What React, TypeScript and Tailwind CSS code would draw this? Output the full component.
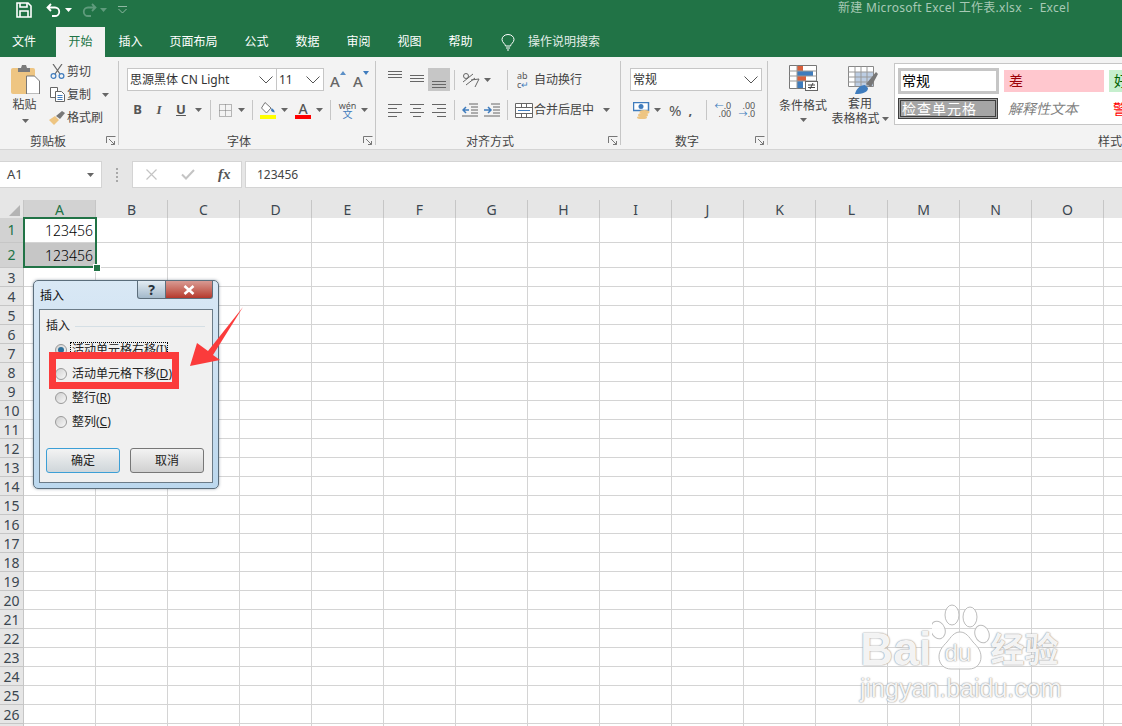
import { Fragment, type ReactNode } from "react";

const COLUMNS = ["A", "B", "C", "D", "E", "F", "G", "H", "I", "J", "K", "L", "M", "N", "O"];
const ROWS = Array.from({ length: 27 }, (_, i) => i + 1);
const TABS = [
  { label: "文件", w: "w-[56px] pr-[8px]" },
  { label: "开始", w: "w-[49px]", active: true },
  { label: "插入", w: "w-[51px]" },
  { label: "页面布局", w: "w-[75px]" },
  { label: "公式", w: "w-[51px]" },
  { label: "数据", w: "w-[51px]" },
  { label: "审阅", w: "w-[51px]" },
  { label: "视图", w: "w-[51px]" },
  { label: "帮助", w: "w-[51px]" },
];

const Caret = ({ className = "" }: { className?: string }) => (
  <svg width="7" height="4" viewBox="0 0 7 4" className={`shrink-0 ${className}`}>
    <path d="M0 0h7L3.5 4z" fill="#666" />
  </svg>
);

const Chevron = () => (
  <svg width="14" height="8" viewBox="0 0 14 8" fill="none" stroke="#555" strokeWidth="1">
    <path d="M0.5 0.5 7 7l6.500-6.500" />
  </svg>
);

const Launcher = () => (
  <svg width="10" height="10" viewBox="0 0 10 10" fill="none" stroke="#777" strokeWidth="1">
    <path d="M0.500 7V0.500H9.500M3 3l5.500 5.500M8.500 5v3.500H5" />
  </svg>
);

// horizontal lines used by the alignment buttons
const Lines = ({ rows, w = 16, h = 16, color = "#666" }: { rows: number[][]; w?: number; h?: number; color?: string }) => (
  <svg width={w} height={h} viewBox={`0 0 ${w} ${h}`} stroke={color} strokeWidth="1">
    {rows.map(([x1, x2, y], i) => (
      <line key={i} x1={x1} x2={x2} y1={y + 0.5} y2={y + 0.5} />
    ))}
  </svg>
);

const Sep = ({ className = "" }: { className?: string }) => <div className={`w-px h-[20px] bg-[#c6c6c6] shrink-0 ${className}`} />;

const Group = ({ width, label, labelPad, children }: { width: string; label: string; labelPad: string; children: ReactNode }) => (
  <div className={`${width} shrink-0 h-full flex`}>
    <div className="flex-1 min-w-0 flex flex-col">
      <div className="h-[75px]">{children}</div>
      <div className="flex-1 flex items-center relative pt-[3px]">
        <div className={`flex-1 text-center text-[12px] leading-[14px] text-[#444] ${labelPad}`}>{label}</div>
        <div className="absolute right-[2px] bottom-[3px]">
          <Launcher />
        </div>
      </div>
    </div>
    <div className="w-px bg-[#c6c6c6] my-[4px]" />
  </div>
);

const Combo = ({ text, width, className = "" }: { text: string; width: string; className?: string }) => (
  <div className={`${width} h-[23px] bg-white border border-[#c6c6c6] flex items-center justify-between pl-[2px] pr-[3px] text-[12px] text-[#333] ${className}`}>
    <span className="whitespace-nowrap">{text}</span>
    <Chevron />
  </div>
);

const ClipRow = ({ icon, label, caret }: { icon: ReactNode; label: string; caret?: boolean }) => (
  <div className="h-[23px] flex items-center">
    <div className="w-[18px] flex justify-center shrink-0">{icon}</div>
    <span className="text-[12px] text-[#444] whitespace-nowrap ml-[1px]">{label}</span>
    {caret && <Caret className="ml-[11px]" />}
  </div>
);

const PasteIcon = () => (
  <svg width="29" height="29" viewBox="0 0 29 29">
    <rect x="0" y="3" width="24" height="26" rx="2" fill="#eec582" />
    <path d="M7 3h3l1-3h4l1 3h3v4H7z" fill="#7b7b7b" />
    <path d="M15.500 11h8l5 5v13h-13z" fill="#fff" stroke="#777" />
  </svg>
);

const FontA = ({ up }: { up: boolean }) => (
  <div className="w-[22px] h-[20px] flex items-start justify-center text-[#666] text-[15px] leading-[22px] font-medium">
    A
    <svg width="6" height="4" viewBox="0 0 6 4" className="mt-[1px]">
      <path d={up ? "M0 4h6L3 0z" : "M0 0h6L3 4z"} fill={up ? "#5b8fc6" : "#3f7cbd"} />
    </svg>
  </div>
);

const GalleryCell = ({ className, children }: { className: string; children: ReactNode }) => (
  <div className={`w-[101px] shrink-0 flex items-center pl-[5px] text-[14px] whitespace-nowrap ${className}`}>{children}</div>
);

const Radio = ({ checked }: { checked?: boolean }) => (
  <div className="w-[12px] h-[12px] rounded-full border border-[#9a9a9a] bg-linear-to-br from-[#cfcfcf] to-[#f8f8f8] flex items-center justify-center shrink-0">
    {checked && <div className="w-[6px] h-[6px] rounded-full bg-[#2c6f99]" />}
  </div>
);

const InsertDialog = () => (
  <div className="absolute left-[33px] top-[280px] w-[186px] h-[209px] rounded-[5px] border border-[#5b6d7b] bg-linear-to-b from-[#d9e8f5] to-[#bcd8ee] px-[5px] pb-[5px] flex flex-col shadow-[0_0_3px_rgba(60,80,100,0.5)]">
    <div className="h-[28px] shrink-0 flex items-start">
      <span className="ml-[1px] mt-[6px] text-[12px] leading-[18px] text-[#111]">插入</span>
      <div className="ml-auto flex">
        <div className="w-[29px] h-[18px] border border-t-0 border-[#5d6f7c] rounded-bl-[3px] bg-linear-to-b from-[#e3ecf3] to-[#a3b9ca] flex items-center justify-center text-[14px] font-bold text-[#27313a]">
          ?
        </div>
        <div className="w-[47px] h-[18px] border border-t-0 border-l-0 border-[#5d6f7c] rounded-br-[3px] bg-linear-to-b from-[#d89a93] to-[#b5372c] flex items-center justify-center">
          <svg width="12" height="10" viewBox="0 0 12 10" stroke="#fff" strokeWidth="2.600">
            <path d="M1.500 1l9 8M10.500 1l-9 8" />
          </svg>
        </div>
      </div>
    </div>
    <div className="flex-1 border border-[#6c7c88] bg-[#f0f0f0] flex flex-col px-[6px] text-[12px] text-[#222]">
      <div className="flex items-center h-[30px] mt-[1px]">
        <span className="shrink-0">插入</span>
        <div className="flex-1 h-px bg-[#d5dfe5] ml-[5px] mr-[1px]" />
      </div>
      <div className="flex flex-col gap-[6px] pl-[9px]">
        <div className="flex items-center h-[18px]">
          <Radio checked />
          <span className="ml-[3px] border border-dotted border-black leading-[14px] whitespace-nowrap pl-[1px]">活动单元格右移(<u>I</u>)</span>
        </div>
        <div className="flex items-center h-[18px]">
          <Radio />
          <span className="ml-[3px] pl-[2px] whitespace-nowrap">活动单元格下移(<u>D</u>)</span>
        </div>
        <div className="flex items-center h-[18px]">
          <Radio />
          <span className="ml-[3px] pl-[2px] whitespace-nowrap">整行(<u>R</u>)</span>
        </div>
        <div className="flex items-center h-[18px]">
          <Radio />
          <span className="ml-[3px] pl-[2px] whitespace-nowrap">整列(<u>C</u>)</span>
        </div>
      </div>
      <div className="flex justify-between mt-auto mb-[9px] mr-[2px]">
        <button className="w-[74px] h-[25px] rounded-[3px] border border-[#3c9fd6] bg-linear-to-b from-[#f3f3f3] to-[#cfd6da] text-[12px] text-[#222]">确定</button>
        <button className="w-[74px] h-[25px] rounded-[3px] border border-[#777] bg-linear-to-b from-[#f3f3f3] to-[#d0d0d0] text-[12px] text-[#222]">取消</button>
      </div>
    </div>
  </div>
);

const Watermark = () => (
  <div className="absolute left-[860px] top-[604px] w-[205px] text-white/90 pointer-events-none [text-shadow:0_0_1px_#8a8a8a,0_0_2px_#aaaaaa]">
    <div className="flex items-end h-[66px]">
      <span className="text-[46px] leading-[42px] font-bold font-['Liberation_Sans',sans-serif]">Bai</span>
      <div className="relative shrink-0 w-[58px] h-[66px]">
        <svg width="58" height="66" viewBox="0 0 58 66" fill="#fff" fillOpacity="0.85" stroke="#bdbdbd" strokeWidth="1">
          <ellipse cx="20" cy="11" rx="7" ry="10" />
          <ellipse cx="38" cy="13" rx="7" ry="10" />
          <ellipse cx="6" cy="26" rx="7" ry="9" transform="rotate(-20 6 26)" />
          <ellipse cx="50" cy="30" rx="7" ry="9" transform="rotate(-20 50 30)" />
          <path d="M28 28c6 0 9 5 13 10 5 5 8 9 8 15 0 7-5 12-12 12H19c-7 0-12-5-12-12 0-6 3-10 8-15 4-5 7-10 13-10z" />
        </svg>
        <span className="absolute left-[13px] top-[36px] text-[24px] leading-[26px] font-['Liberation_Sans',sans-serif]">du</span>
      </div>
      <span className="text-[34px] leading-[44px] font-bold ml-[1px] font-['Noto_Sans_CJK_SC',sans-serif] whitespace-nowrap">经验</span>
    </div>
    <div className="mt-[4px] text-[25px] leading-[28px] whitespace-nowrap font-['Liberation_Sans',sans-serif]">jingyan.baidu.com</div>
  </div>
);

export default function App() {
  return (
    <div className="relative w-[1122px] h-[726px] overflow-hidden bg-white flex flex-col font-['Noto_Sans','Noto_Sans_CJK_SC',sans-serif]">
      {/* title bar */}
      <div className="h-[57px] shrink-0 bg-[#217346] flex flex-col">
        <div className="h-[27px] flex items-start">
          <svg width="16" height="16" viewBox="0 0 16 16" fill="none" stroke="#fff" strokeWidth="1.600" className="ml-[16px] mt-[2px] shrink-0">
            <path d="M1 1h11l3 3v11H1z" />
            <path d="M4 1v4h7V1M4 15V9h8v6" />
          </svg>
          <svg width="15" height="14" viewBox="0 0 15 14" fill="none" stroke="#fff" strokeWidth="1.800" className="ml-[14px] mt-[3px] shrink-0">
            <path d="M5 1 1.500 4.500 5 8M2 4.500h7a4.200 4.200 0 0 1 0 8.500H6" />
          </svg>
          <Caret className="ml-[4px] mt-[8px] [&_path]:fill-white" />
          <svg width="15" height="14" viewBox="0 0 15 14" fill="none" stroke="#5f9b7c" strokeWidth="1.800" className="ml-[10px] mt-[3px] shrink-0">
            <path d="M10 1l3.500 3.500L10 8M13 4.500H6a4.200 4.200 0 0 0 0 8.500h3" />
          </svg>
          <Caret className="ml-[3px] mt-[8px] [&_path]:fill-[#5f9b7c]" />
          <svg width="9" height="8" viewBox="0 0 9 8" fill="none" stroke="#8fb8a2" className="ml-[11px] mt-[6px] shrink-0">
            <path d="M0 0.500h9M0.500 3l4 4 4-4" />
          </svg>
          <div className="ml-[711px] mt-[-1px] text-[12px] leading-[18px] tracking-[0.3px] text-[#a7c9b5] whitespace-pre">新建 Microsoft Excel 工作表.xlsx  -  Excel</div>
        </div>
        <div className="h-[30px] flex items-stretch text-[12px] text-white">
          {TABS.map((t) => (
            <div
              key={t.label}
              className={`${t.w} flex items-center justify-center shrink-0 ${t.active ? "bg-[#f3f3f3] text-[#217346]" : ""}`}
            >
              {t.label}
            </div>
          ))}
          <div className="flex items-center ml-[15px]">
            <svg width="14" height="17" viewBox="0 0 14 17" fill="none" stroke="#fff" strokeWidth="1">
              <path d="M4.500 12c0-2-3.500-3.500-3.500-6.500a6 5 0 0 1 12 0c0 3-3.500 4.500-3.500 6.500zM5 14h4M6 16h2" />
            </svg>
            <span className="ml-[13px] text-[#e3eee8]">操作说明搜索</span>
          </div>
        </div>
      </div>

      {/* ribbon */}
      <div className="h-[93px] shrink-0 bg-[#f3f3f3] border-b border-[#d4d4d4] flex overflow-hidden">
        <Group width="w-[119px]" label="剪贴板" labelPad="pr-[22px]">
          <div className="flex h-full">
            <div className="ml-[11px] w-[29px] flex flex-col items-center pt-[8px] shrink-0">
              <PasteIcon />
              <span className="text-[12px] leading-[18px] text-[#444] mt-[2px] mr-[2px]">粘贴</span>
              <Caret className="mt-[5px]" />
            </div>
            <div className="ml-[8px] pt-[3px]">
              <ClipRow
                label="剪切"
                icon={
                  <svg width="15" height="15" viewBox="0 0 15 15" fill="none" strokeWidth="1.200">
                    <path d="M3 0l7 10M12 0 5 10" stroke="#666" />
                    <circle cx="3.500" cy="12" r="2.400" stroke="#3f7cbd" />
                    <circle cx="11.500" cy="12" r="2.400" stroke="#3f7cbd" />
                  </svg>
                }
              />
              <ClipRow
                label="复制"
                caret
                icon={
                  <svg width="15" height="15" viewBox="0 0 15 15" fill="#fff" stroke="#666">
                    <path d="M0.500 0.500h7v10h-7z" />
                    <path d="M5.500 4.500h6l3 3v7h-9z" />
                    <path d="M7.500 8.500h5M7.500 10.500h5M7.500 12.500h5" stroke="#3f7cbd" />
                  </svg>
                }
              />
              <ClipRow
                label="格式刷"
                icon={
                  <svg width="16" height="14" viewBox="0 0 16 14">
                    <path d="M0 9l6-4 4 4-5 5z" fill="#eec582" />
                    <path d="M7 5l6-5 3 2-5 6z" fill="#777" />
                  </svg>
                }
              />
            </div>
          </div>
        </Group>

        <Group width="w-[257px]" label="字体" labelPad="pr-[16px]">
          <div className="pl-[8px] pt-[11px]">
            <div className="flex items-center">
              <Combo text="思源黑体 CN Light" width="w-[150px]" />
              <Combo text="11" width="w-[48px]" className="ml-[-1px]" />
              <div className="ml-[3px] flex gap-[1px]">
                <FontA up />
                <FontA up={false} />
              </div>
            </div>
            <div className="flex items-center h-[20px] mt-[9px] text-[#555] text-[13px]">
              <span className="w-[21px] text-center font-bold">B</span>
              <span className="w-[22px] text-center italic font-['Liberation_Serif',serif] font-bold">I</span>
              <span className="w-[22px] text-center underline font-bold">U</span>
              <Caret className="ml-[3px]" />
              <Sep className="ml-[8px]" />
              <svg width="13" height="13" viewBox="0 0 13 13" fill="none" stroke="#777" strokeDasharray="1 1" className="ml-[8px] shrink-0">
                <path d="M0.500 0.500h12v12H0.500zM6.500 0.500v12M0.500 6.500h12" />
              </svg>
              <Caret className="ml-[6px]" />
              <Sep className="ml-[7px]" />
              <svg width="16" height="17" viewBox="0 0 16 17" className="ml-[7px] shrink-0">
                <path d="M5 0.500 11 6l-4.500 5L1.500 6z" fill="#fff" stroke="#777" />
                <path d="M11.500 6c2 1 3.500 3 3 4.500-1-.5-2.500-.5-3.500-2z" fill="#3f7cbd" />
                <rect x="0" y="13" width="16" height="4" fill="#ffff00" />
              </svg>
              <Caret className="ml-[5px]" />
              <div className="ml-[7px] w-[16px] flex flex-col items-center shrink-0">
                <span className="text-[14px] leading-[14px] font-medium text-[#555]">A</span>
                <div className="w-[16px] h-[4px] bg-[#ff0000] mt-[-1px]" />
              </div>
              <Caret className="ml-[5px]" />
              <Sep className="ml-[7px]" />
              <div className="ml-[8px] w-[17px] flex flex-col items-center leading-[9px] shrink-0">
                <span className="text-[9px] text-[#555]">wén</span>
                <span className="text-[10px] text-[#3f7cbd]">文</span>
              </div>
              <Caret className="ml-[5px]" />
            </div>
          </div>
        </Group>

        <Group width="w-[245px]" label="对齐方式" labelPad="pr-[16px]">
          <div className="pl-[12px] pt-[11px]">
            <div className="flex items-center h-[23px]">
              <div className="w-[22px] h-[23px] shrink-0">
                <Lines w={15} h={23} rows={[[0, 14, 3], [0, 14, 6], [0, 14, 9]]} />
              </div>
              <div className="w-[18px] h-[23px] shrink-0">
                <Lines w={15} h={23} rows={[[0, 14, 7], [0, 14, 10], [0, 14, 13]]} />
              </div>
              <div className="w-[22px] h-[23px] bg-[#c6c6c6] flex justify-center shrink-0">
                <Lines w={15} h={23} rows={[[0, 14, 13], [0, 14, 16], [0, 14, 19]]} />
              </div>
              <Sep className="ml-[4px]" />
              <svg width="18" height="17" viewBox="0 0 18 17" fill="none" stroke="#666" className="ml-[7px] shrink-0">
                <path d="M1 11 11 3M4 14l9-7M13 16l4-8-8 1" />
                <circle cx="4" cy="5" r="2.500" />
              </svg>
              <Caret className="ml-[4px]" />
              <Sep className="ml-[16px]" />
              <div className="ml-[9px] w-[14px] flex flex-col text-[9px] leading-[9px] text-[#555] shrink-0">
                <span>ab</span>
                <span>c<span className="text-[#3f7cbd]">↵</span></span>
              </div>
              <span className="ml-[3px] text-[12px] text-[#444] whitespace-nowrap">自动换行</span>
            </div>
            <div className="flex items-center h-[20px] mt-[9px]">
              <div className="w-[22px] shrink-0">
                <Lines w={15} rows={[[0, 14, 2], [0, 9, 6], [0, 14, 10], [0, 9, 14]]} />
              </div>
              <div className="w-[22px] shrink-0">
                <Lines w={15} rows={[[0, 14, 2], [3, 11, 6], [0, 14, 10], [3, 11, 14]]} />
              </div>
              <div className="w-[22px] shrink-0">
                <Lines w={15} rows={[[0, 14, 2], [5, 14, 6], [0, 14, 10], [5, 14, 14]]} />
              </div>
              <Sep />
              <svg width="16" height="14" viewBox="0 0 16 14" fill="none" className="ml-[7px] shrink-0">
                <path d="M7 1h9M9 4h7M9 7h7M9 10h7M0 13h16" stroke="#666" />
                <path d="M1 7h6M4 4 1 7l3 3" stroke="#3f7cbd" strokeWidth="1.500" />
              </svg>
              <svg width="16" height="14" viewBox="0 0 16 14" fill="none" className="ml-[6px] shrink-0">
                <path d="M7 1h9M9 4h7M9 7h7M9 10h7M0 13h16" stroke="#666" />
                <path d="M0 7h6M4 4l3 3-3 3" stroke="#3f7cbd" strokeWidth="1.500" />
              </svg>
              <Sep className="ml-[7px]" />
              <svg width="18" height="15" viewBox="0 0 18 15" fill="#fff" stroke="#666" className="ml-[7px] shrink-0">
                <path d="M0.500 0.500h17v14H0.500zM0.500 4.500h17M0.500 10.500h17M6.500 0.500v4M11.500 0.500v4M6.500 10.500v4M11.500 10.500v4" />
                <path d="M3 7.500h12" stroke="#3f7cbd" />
              </svg>
              <span className="ml-[1px] text-[12px] text-[#444] whitespace-nowrap">合并后居中</span>
              <Caret className="ml-[9px]" />
            </div>
          </div>
        </Group>

        <Group width="w-[147px]" label="数字" labelPad="pr-[14px]">
          <div className="pl-[9px] pt-[11px]">
            <Combo text="常规" width="w-[132px]" />
            <div className="flex items-center h-[20px] mt-[9px]">
              <svg width="17" height="17" viewBox="0 0 17 17" className="ml-[3px] shrink-0">
                <rect x="0.500" y="0.500" width="15" height="8" fill="#fff" stroke="#3f7cbd" strokeWidth="1.500" />
                <circle cx="8" cy="4.500" r="2.500" fill="#3f7cbd" />
                <ellipse cx="11.500" cy="10" rx="5" ry="2" fill="#eec582" />
                <ellipse cx="10" cy="13" rx="5" ry="2" fill="#eec582" />
                <ellipse cx="9" cy="15.500" rx="5" ry="1.500" fill="#eec582" />
              </svg>
              <Caret className="ml-[4px]" />
              <span className="ml-[8px] text-[15px] text-[#555]">%</span>
              <span className="ml-[7px] text-[13px] font-bold text-[#555] leading-[12px]">,</span>
              <Sep className="ml-[14px]" />
              <div className="ml-[7px] w-[17px] text-[9px] leading-[8px] text-[#555] text-right shrink-0">
                <div><span className="text-[#3f7cbd]">←</span>.0</div>
                <div>.00</div>
              </div>
              <div className="ml-[7px] w-[17px] text-[9px] leading-[8px] text-[#555] text-right shrink-0">
                <div>.00</div>
                <div><span className="text-[#3f7cbd]">→</span>.0</div>
              </div>
            </div>
          </div>
        </Group>

        <div className="flex-1 min-w-0 flex flex-col">
          <div className="h-[75px] flex">
            <div className="ml-[10px] w-[50px] flex flex-col items-center pt-[8px] shrink-0">
              <svg width="29" height="26" viewBox="0 0 29 26">
                <g fill="#fff" stroke="#777">
                  <path d="M0.500 0.500h27v23H0.500z" />
                </g>
                <path d="M8 1h6v5H8zM8 11h9v5H8z" fill="#d9603c" />
                <path d="M8 6h16v5H8zM8 16h6v7H8z" fill="#3f7cbd" />
                <path d="M0.500 6h27M0.500 11h27M0.500 16h27M8 0.500v23" stroke="#999" fill="none" />
                <rect x="16.500" y="16.500" width="12" height="9" fill="#fff" stroke="#666" />
                <path d="M19 20h7M19 22.500h7M24 18l-3 6" stroke="#444" fill="none" />
              </svg>
              <span className="mt-[6px] text-[12px] leading-[18px] text-[#444] whitespace-nowrap">条件格式</span>
              <Caret className="mt-[3px]" />
            </div>
            <div className="ml-[4px] w-[56px] flex flex-col items-center pt-[9px] shrink-0">
              <svg width="30" height="28" viewBox="0 0 30 28" className="ml-[6px]">
                <path d="M0.500 0.500h25v20H0.500z" fill="#fff" stroke="#888" />
                <path d="M7 6h18v14H7z" fill="#bccde3" />
                <path d="M0.500 6h25M0.500 11h25M0.500 16h25M7 0.500v20M13 0.500v20M19 0.500v20" stroke="#999" fill="none" />
                <path d="M18 18 28 6l2 2-7 13z" fill="#777" />
                <path d="M7 28c1-5 5-9 10-9l3 3c0 4-5 6-13 6z" fill="#3f7cbd" />
              </svg>
              <span className="mt-[2px] text-[12px] leading-[15px] text-[#444]">套用</span>
              <div className="flex items-center whitespace-nowrap text-[12px] leading-[15px] text-[#444]">
                表格格式
                <Caret className="ml-[2px]" />
              </div>
            </div>
            <div className="ml-[6px] mt-[6px] h-[62px] flex-1 min-w-0 bg-white border-y border-l border-[#c6c6c6] overflow-hidden flex flex-col gap-[2px] pl-[3px] pt-[3px]">
              <div className="flex items-center gap-[5px] h-[27px]">
                <GalleryCell className="h-[26px] bg-white border-[3px] border-[#c6c6c6] text-black !pl-[1px] pb-[1px]">常规</GalleryCell>
                <GalleryCell className="h-[22px] !w-[100px] bg-[#ffc7ce] text-[#9c0006]">差</GalleryCell>
                <GalleryCell className="h-[22px] bg-[#c6efce] text-[#006100]">好</GalleryCell>
              </div>
              <div className="flex items-center gap-[5px] h-[24px]">
                <GalleryCell className="h-[21px] !w-[100px] bg-[#a5a5a5] border-[3px] border-double border-[#3f3f3f] text-white tracking-[1px] !pl-[1px]">检查单元格</GalleryCell>
                <GalleryCell className="h-[22px] !w-[100px] bg-white text-[#7f7f7f] italic">解释性文本</GalleryCell>
                <GalleryCell className="h-[22px] bg-white text-[#ff0000]">警告文本</GalleryCell>
              </div>
            </div>
          </div>
          <div className="flex-1 flex items-center justify-end pt-[3px] text-[12px] leading-[14px] text-[#444]">
            <span className="whitespace-nowrap">样式</span>
          </div>
        </div>
      </div>

      {/* formula bar */}
      <div className="h-[49px] shrink-0 bg-[#e6e6e6] flex items-start pt-[11px]">
        <div className="w-[102px] h-[27px] bg-white border border-[#d4d4d4] border-l-0 flex items-center justify-between pl-[7px] pr-[7px] text-[13px] text-[#444] shrink-0">
          A1
          <Caret />
        </div>
        <div className="w-[30px] h-[27px] flex items-center justify-center text-[#aaa] shrink-0">
          <div className="flex flex-col gap-[2px]">
            <div className="w-[2px] h-[2px] bg-[#a8a8a8]" />
            <div className="w-[2px] h-[2px] bg-[#a8a8a8]" />
            <div className="w-[2px] h-[2px] bg-[#a8a8a8]" />
            <div className="w-[2px] h-[2px] bg-[#a8a8a8]" />
          </div>
        </div>
        <div className="w-[110px] h-[27px] bg-white border border-[#d4d4d4] flex items-center shrink-0">
          <svg width="11" height="11" viewBox="0 0 11 11" stroke="#c4c4c4" strokeWidth="1.200" className="ml-[13px] shrink-0">
            <path d="M0.500 0.500l10 10M10.500 0.500l-10 10" />
          </svg>
          <svg width="14" height="11" viewBox="0 0 14 11" fill="none" stroke="#c4c4c4" strokeWidth="2" className="ml-[24px] shrink-0">
            <path d="M1 5.500l4 4L13 1" />
          </svg>
          <span className="ml-[23px] text-[15px] italic font-bold text-[#555] font-['Liberation_Serif',serif]">fx</span>
        </div>
        <div className="ml-[3px] flex-1 h-[27px] bg-white border-y border-l border-[#d4d4d4] flex items-center pl-[11px] text-[12px] text-[#444]">123456</div>
      </div>

      {/* sheet */}
      <div className="flex-1 min-h-0 relative overflow-hidden">
        <div className="h-[19px] flex bg-[#e6e6e6] border-t border-[#e6e6e6]">
          <div className="w-[24px] h-[18px] border-r border-[#c6c6c6] flex items-end justify-end pr-[3px] pb-[2px] shrink-0">
            <svg width="11" height="11" viewBox="0 0 11 11">
              <path d="M11 0v11H0z" fill="#b4b4b4" />
            </svg>
          </div>
          {COLUMNS.map((c) => (
            <div
              key={c}
              className={`w-[72px] h-[18px] shrink-0 border-r border-[#c6c6c6] flex items-center justify-center text-[14px] ${
                c === "A" ? "bg-[#d2d2d2] text-[#217346]" : "text-[#3c4650]"
              }`}
            >
              {c}
            </div>
          ))}
        </div>
        {ROWS.map((r) => (
          <div key={r} className={`flex ${r <= 2 ? "h-[25px]" : "h-[19px]"}`}>
            <div
              className={`w-[24px] shrink-0 border-r border-b border-[#c6c6c6] flex items-center justify-center text-[14px] leading-[16px] ${
                r <= 2 ? "bg-[#d2d2d2] text-[#217346]" : "bg-[#e6e6e6] text-[#3c4650] pt-[2px]"
              }`}
            >
              {r <= 26 ? r : ""}
            </div>
            {COLUMNS.map((c) => (
              <Fragment key={c}>
                <div
                  className={`w-[72px] shrink-0 border-r border-b border-[#d4d4d4] flex items-center justify-end pr-[2px] text-[14px] font-light text-black ${
                    c === "A" && r === 2 ? "bg-[#c6c6c6]" : ""
                  }`}
                >
                  {c === "A" && r <= 2 ? "123456" : ""}
                </div>
              </Fragment>
            ))}
            <div className="flex-1 border-b border-[#d4d4d4]" />
          </div>
        ))}
        {/* selection box */}
        <div className="absolute left-[23px] top-[18px] w-[74px] h-[51px] border-2 border-[#217346]" />
        <div className="absolute left-[93px] top-[65px] w-[6px] h-[6px] bg-[#217346] border border-white box-content" />
      </div>

      <InsertDialog />

      {/* annotation */}
      <div className="absolute left-[49px] top-[352px] w-[130px] h-[37px] border-[7px] border-[#fb3b3b]" />
      <svg width="60" height="66" viewBox="0 0 60 66" className="absolute left-[187px] top-[304px]">
        <path d="M3 62 10 39 21 47 56 3 26 51 33 56z" fill="#fb3b3b" />
      </svg>

      <Watermark />
    </div>
  );
}
